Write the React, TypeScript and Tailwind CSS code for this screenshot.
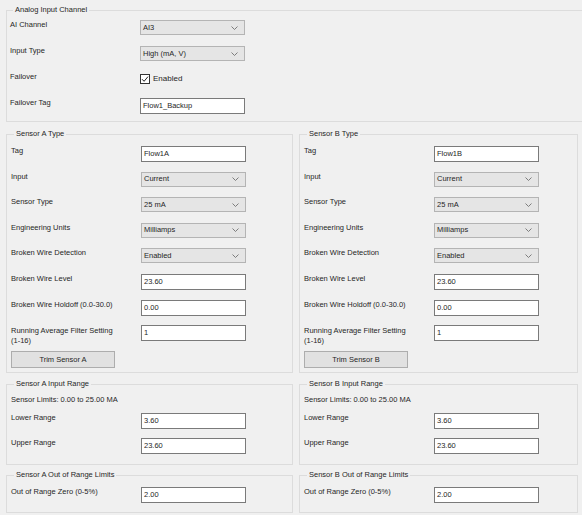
import React from "react";

function Chevron() {
  return (
    <svg width="7" height="4" viewBox="0 0 7 4" className="shrink-0">
      <path d="M0.5 0.5 L3.5 3.5 L6.5 0.5" fill="none" stroke="#707070" strokeWidth="0.9" />
    </svg>
  );
}

function Select({ value }: { value: string }) {
  return (
    <div className="w-[105px] h-[15px] bg-[#e5e5e5] border border-[#b4b4b4] flex items-center justify-between pl-[2px] pr-[6px]">
      <span className="leading-[10px]">{value}</span>
      <Chevron />
    </div>
  );
}

function TextBox({ value }: { value: string }) {
  return (
    <div className="w-[105px] h-[16px] bg-white border border-[#7a7a7a] flex items-center pl-[2px]">
      <span className="leading-[10px]">{value}</span>
    </div>
  );
}

function Row({
  label,
  children,
  h,
}: {
  label: React.ReactNode;
  children: React.ReactNode;
  h: string;
}) {
  return (
    <div className={`flex items-start ${h}`}>
      <div className="w-[130px] leading-[10px]">{label}</div>
      {children}
    </div>
  );
}

function SensorType({ s, tag }: { s: string; tag: string }) {
  return (
    <fieldset className="border border-[#dcdcdc] pt-[7px] pb-[4px] pl-[4px]">
      <legend className="ml-[3px] px-[2px] leading-[10px]">Sensor {s} Type</legend>
      <Row label="Tag" h="h-[25.6px]">
        <TextBox value={tag} />
      </Row>
      <Row label="Input" h="h-[25.6px]">
        <Select value="Current" />
      </Row>
      <Row label="Sensor Type" h="h-[25.6px]">
        <Select value="25 mA" />
      </Row>
      <Row label="Engineering Units" h="h-[25.6px]">
        <Select value="Milliamps" />
      </Row>
      <Row label="Broken Wire Detection" h="h-[25.6px]">
        <Select value="Enabled" />
      </Row>
      <Row label="Broken Wire Level" h="h-[25.6px]">
        <TextBox value="23.60" />
      </Row>
      <Row label="Broken Wire Holdoff (0.0-30.0)" h="h-[25.6px]">
        <TextBox value="0.00" />
      </Row>
      <Row
        label={
          <span className="block pt-[1px]">
            Running Average Filter Setting
            <br />
            (1-16)
          </span>
        }
        h="h-[26px]"
      >
        <TextBox value="1" />
      </Row>
      <div className="h-[17px] w-[104px] bg-[#e1e1e1] border border-[#adadad] flex items-center justify-center">
        <span className="leading-[10px]">Trim Sensor {s}</span>
      </div>
    </fieldset>
  );
}

function InputRange({ s }: { s: string }) {
  return (
    <fieldset className="border border-[#dcdcdc] pt-[6px] pb-[10px] pl-[4px]">
      <legend className="ml-[3px] px-[2px] leading-[10px]">Sensor {s} Input Range</legend>
      <div className="leading-[10px] h-[18px]">Sensor Limits: 0.00 to 25.00 MA</div>
      <Row label="Lower Range" h="h-[25px]">
        <TextBox value="3.60" />
      </Row>
      <Row label="Upper Range" h="h-[16px]">
        <TextBox value="23.60" />
      </Row>
    </fieldset>
  );
}

function OutOfRange({ s }: { s: string }) {
  return (
    <fieldset className="border border-[#dcdcdc] pt-[7px] pb-[9px] pl-[4px]">
      <legend className="ml-[3px] px-[2px] leading-[10px]">Sensor {s} Out of Range Limits</legend>
      <Row label="Out of Range Zero (0-5%)" h="h-[16px]">
        <TextBox value="2.00" />
      </Row>
    </fieldset>
  );
}

export default function App() {
  return (
    <div className="w-[582px] h-[515px] overflow-hidden bg-[#f0f0f0] pt-[5px] pl-[6px] text-[7.5px] text-[#262626] font-['Liberation_Sans',Arial,sans-serif]">
      <fieldset className="w-[600px] border border-[#dcdcdc] pt-[5px] pb-[7px] pl-[3px]">
        <legend className="ml-[3px] px-[2px] leading-[10px]">Analog Input Channel</legend>
        <Row label="AI Channel" h="h-[26px]">
          <Select value="AI3" />
        </Row>
        <Row label="Input Type" h="h-[26px]">
          <Select value="High (mA, V)" />
        </Row>
        <Row label="Failover" h="h-[26px]">
          <div className="flex items-center pt-[2px]">
            <div className="w-[10px] h-[10px] bg-white border border-[#333] flex items-center justify-center">
              <svg width="8" height="8" viewBox="0 0 8 8">
                <path d="M1 4.2 L3.1 6.3 L7 1.6" fill="none" stroke="#222" strokeWidth="1" />
              </svg>
            </div>
            <span className="ml-[3px] leading-[10px] text-[8px]">Enabled</span>
          </div>
        </Row>
        <Row label="Failover Tag" h="h-[16px]">
          <TextBox value="Flow1_Backup" />
        </Row>
      </fieldset>

      <div className="flex gap-[6px] mt-[7px]">
        <div className="w-[287px] flex flex-col">
          <SensorType s="A" tag="Flow1A" />
          <div className="mt-[6px]">
            <InputRange s="A" />
          </div>
          <div className="mt-[5px]">
            <OutOfRange s="A" />
          </div>
        </div>
        <div className="w-[279px] flex flex-col">
          <SensorType s="B" tag="Flow1B" />
          <div className="mt-[6px]">
            <InputRange s="B" />
          </div>
          <div className="mt-[5px]">
            <OutOfRange s="B" />
          </div>
        </div>
      </div>
    </div>
  );
}
